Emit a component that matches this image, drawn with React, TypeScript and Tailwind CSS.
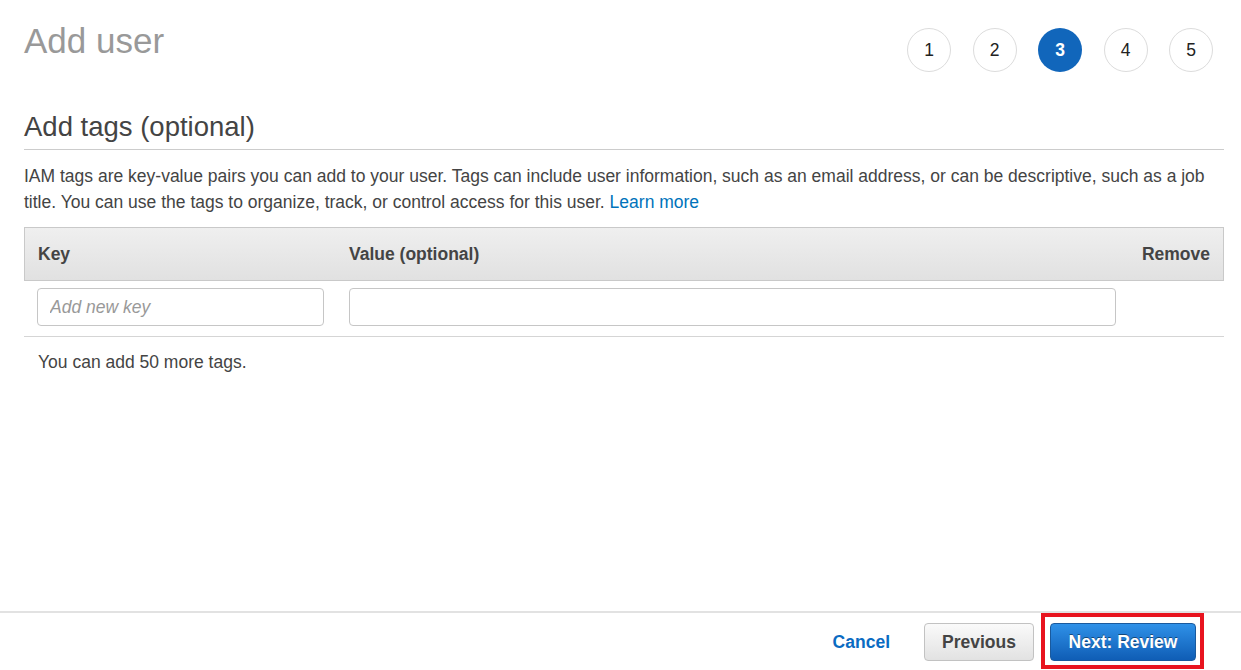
import React from "react";

const font = { fontFamily: '"Liberation Sans", Arial, sans-serif' };

function Step({ n, active }: { n: number; active?: boolean }) {
  return (
    <div
      className={
        active
          ? "flex h-[44px] w-[44px] items-center justify-center rounded-full bg-[#1166bb] text-[17.5px] font-bold text-white"
          : "flex h-[44px] w-[44px] items-center justify-center rounded-full border border-[#dcdcdc] bg-white text-[17.5px] text-[#222]"
      }
    >
      {n}
    </div>
  );
}

export default function App() {
  return (
    <div
      className="flex h-[670px] w-[1241px] flex-col overflow-hidden bg-white text-[#444]"
      style={font}
    >
      <div className="pl-[24px] pr-[17px] pt-[21px]">
        <div className="flex items-start justify-between">
          <h1 className="text-[35px] leading-[40px] text-[#999]">Add user</h1>
          <div className="mr-[11px] mt-[7px] flex gap-[21.5px]">
            <Step n={1} />
            <Step n={2} />
            <Step n={3} active />
            <Step n={4} />
            <Step n={5} />
          </div>
        </div>

        <h2 className="mt-[39px] border-b border-[#cccccc] pb-[6px] text-[27.5px] leading-[32px] text-[#444]">
          Add tags (optional)
        </h2>

        <p className="mt-[13px] text-[17.5px] leading-[26px] text-[#444]">
          IAM tags are key-value pairs you can add to your user. Tags can include user information, such as an
          email address, or can be descriptive, such as a job title. You can use the tags to organize, track, or
          control access for this user.{" "}
          <a className="text-[#0073bb]" href="#">
            Learn more
          </a>
        </p>

        <div className="mt-[12px]">
          <div className="grid h-[54px] grid-cols-[311px_793px_1fr] items-center border border-[#c9c9c9] bg-gradient-to-b from-[#efefef] to-[#e1e1e1] text-[17.5px] font-bold text-[#444]">
            <div className="pl-[13px]">Key</div>
            <div className="pl-[13px]">Value (optional)</div>
            <div className="pr-[13px] text-right">Remove</div>
          </div>
          <div className="grid grid-cols-[312px_793px_1fr] border-b border-[#d5d5d5] pb-[10px] pt-[7px]">
            <div className="pl-[13px]">
              <input
                placeholder="Add new key"
                className="h-[38px] w-[287px] rounded-[4px] border border-[#c6c6c6] px-[12px] text-[17.5px] text-[#444] placeholder:italic placeholder:text-[#999] outline-none"
                style={font}
              />
            </div>
            <div className="pl-[13px]">
              <input
                className="h-[38px] w-[767px] rounded-[4px] border border-[#c6c6c6] px-[12px] text-[17.5px] text-[#444] outline-none"
                style={font}
              />
            </div>
            <div />
          </div>
          <div className="mt-[12px] pl-[14px] text-[17.5px] leading-[26px] text-[#444]">
            You can add 50 more tags.
          </div>
        </div>
      </div>

      <div className="mt-auto flex h-[59px] items-start justify-end border-t-2 border-[#e2e2e2] pr-[45px] pt-[10px]">
        <a href="#" className="mr-[34px] flex h-[38px] items-center text-[17.5px] font-bold text-[#0a6bc2]">
          Cancel
        </a>
        <button
          className="h-[38px] w-[110px] rounded-[4px] border border-[#c2c2c2] bg-gradient-to-b from-[#fafafa] to-[#e2e2e2] text-[17.5px] font-bold text-[#444]"
          style={font}
        >
          Previous
        </button>
        <div className="relative ml-[16px]">
          <button
            className="h-[38px] w-[146px] rounded-[4px] border border-[#1a5a9e] bg-gradient-to-b from-[#2f91e8] to-[#0f5db5] text-[17.5px] font-bold text-white [text-shadow:0_-1px_0_rgba(0,0,0,0.45)]"
            style={font}
          >
            Next: Review
          </button>
          <span className="pointer-events-none absolute -bottom-[8px] -left-[9px] -right-[8px] -top-[10px] border-4 border-[#e8141f]" />
        </div>
      </div>
    </div>
  );
}
